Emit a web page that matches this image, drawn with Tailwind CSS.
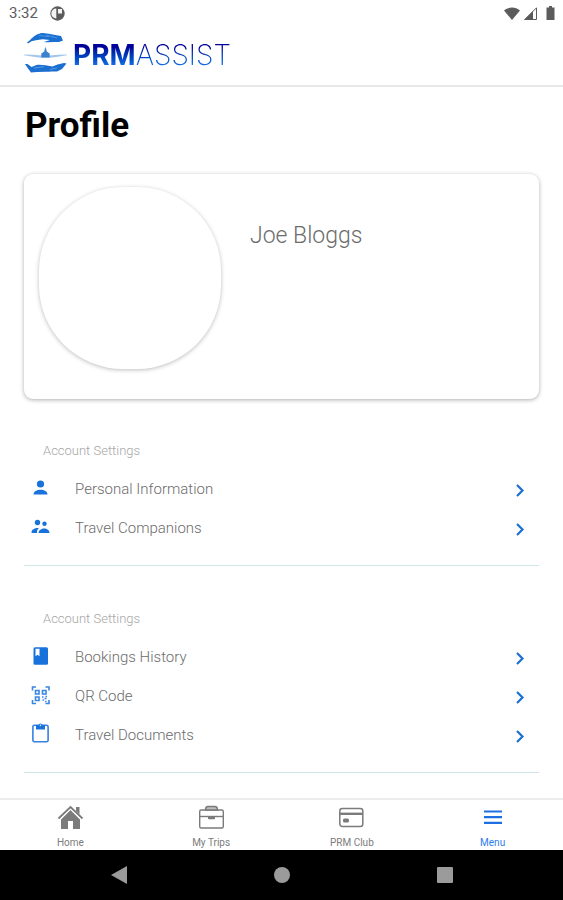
<!DOCTYPE html>
<html lang="en">
<head>
<meta charset="utf-8">
<meta name="viewport" content="width=device-width, initial-scale=1">
<title>Profile</title>
<script src="https://cdn.jsdelivr.net/npm/@tailwindcss/browser@4"></script>
</head>
<body class="flex min-h-screen flex-col bg-white font-['Roboto',sans-serif] text-[#6c6c6c]">
  <div class="flex h-[26px] items-center justify-between pr-2 pl-[9px] text-[#5c5c5c]">
    <div class="flex items-center gap-3">
      <span class="text-[15px] leading-5">3:32</span>
      <svg class="size-[15px]" viewBox="0 0 15 15" aria-hidden="true"><circle cx="7.500" cy="7.500" r="7.200" fill="#5c5c5c"/><path d="M6.300 2.500v10A5 5 0 0 1 6.300 2.500zM8 3h4v4.500H8z" fill="#f4f4f4"/></svg>
    </div>
    <div class="flex items-center gap-1">
      <svg class="h-[13px] w-4" viewBox="0 0 16 13" aria-hidden="true"><path d="M0 3.500C4.500-.5 11.500-.5 16 3.500L8 13z" fill="#5c5c5c"/></svg>
      <svg class="size-[13px]" viewBox="0 0 13 13" aria-hidden="true"><path d="M12.500.8v11.700H.8z" fill="none" stroke="#5c5c5c"/><path d="M9 4v9H0z" fill="#5c5c5c"/></svg>
      <span class="w-px"></span>
      <svg class="h-[14px] w-[9px]" viewBox="0 0 9 14" aria-hidden="true"><path d="M3 0h3v1.500h2.500V14H.5V1.500H3z" fill="#5c5c5c"/></svg>
    </div>
  </div>

  <header class="flex h-[61px] items-start gap-1.5 border-b-2 border-[#e8e8e8] pt-1.5 pl-6">
    <svg class="h-[42px] w-[43px]" viewBox="0 0 43 42" aria-hidden="true">
      <path d="M3 10.500C7 8 8 5 12 3c2-1 4-2 6-2l3 .2c5 .5 10 1.800 16 2.800l2 4.500-4 1.500c-4-.2-9 .5-15 0l6-2-7-.8C13 7.500 10 9 8 9L4 11.500z" fill="#1b6fd0"/>
      <path d="M15 3.500l10 1.200M22 3l11 3" stroke="#6fb0ee" stroke-width=".6"/>
      <path d="M0 22.500l9 .3 9 .7v-2l2.500-1.200V17l1-2.500 1 2.500v3.300L25 21.500v2l9-.7 9-.3v.8L32 25l-6 .7h-9L11 25 0 23.300z" fill="#a3c6ec"/>
      <path d="M21.500 15.500l1.200 4 3 2v4h-8.400v-4l3-2z" fill="#3d82ce"/>
      <path d="M1 32h2.500l4 3 5-2c3-.8 6 .2 9 .2l7 1.300 5-2L40 31l2.500.5L38 37l-5 2.500c-4 .2-7 0-11 .3l-9 .2-6 .5-3-4z" fill="#1b6fd0"/>
      <path d="M10 36l10-1.300M26 37.500l7-1.500" stroke="#6fb0ee" stroke-width=".7"/>
    </svg>
    <div class="bg-linear-to-b from-[#00009a] from-35% to-[#2478ee] to-80% bg-clip-text pt-px font-['Inter','Lato',sans-serif] text-[28px] leading-[44px] text-transparent"><span class="font-bold">PRM</span><span class="font-extralight">ASSIST</span></div>
  </header>

  <main class="flex-1 px-6 pt-4">
    <h1 class="pt-px pl-px text-[35px] leading-[44px] font-bold text-black">Profile</h1>

    <section class="mt-[26px] flex h-[225px] gap-[29px] rounded-[9px] bg-white pt-[13px] pl-[15px] shadow-[0_1px_4px_rgba(0,0,0,0.32)]">
      <div class="size-[182px] shrink-0 rounded-[84px] bg-white shadow-[0_1px_4px_rgba(0,0,0,0.26)]"></div>
      <p class="pt-[35px] text-[23px] leading-7 font-light">Joe Bloggs</p>
    </section>

    <section class="mt-8 border-b border-[#cfe6e8] pb-[17px]">
      <h2 class="flex h-[39px] items-center pl-[19px] text-[13px] font-light text-[#a6a6a6]">Account Settings</h2>
      <a href="#personal" class="flex h-[39px] items-center pr-[14px] pl-1.5 text-[15px] font-light">
        <svg class="mr-[25px] size-5 text-[#1872dc]" viewBox="0 0 20 20" fill="currentColor" aria-hidden="true"><circle cx="10.500" cy="4" r="3.600"/><path d="M3.500 14.500c0-6.400 14-6.400 14 0z"/></svg>
        <span class="flex-1">Personal Information</span>
        <svg class="h-3.5 w-2.5" viewBox="0 0 10 14" fill="none" stroke="#1b70d2" stroke-width="2.200" aria-hidden="true"><path d="M2 2l5.500 5.500L2 13"/></svg>
      </a>
      <a href="#companions" class="flex h-[39px] items-center pr-[14px] pl-1.5 text-[15px] font-light">
        <svg class="mr-[25px] size-5 text-[#1872dc]" viewBox="0 0 20 20" fill="currentColor" aria-hidden="true"><circle cx="7.500" cy="3.500" r="2.700"/><circle cx="14.500" cy="4.700" r="2.200"/><path d="M1.500 14c0-4 3.500-5.300 7.500-5-1.500 1.200-2 2.500-2 5zM8.500 14c.5-6 11-6 11 0z"/></svg>
        <span class="flex-1">Travel Companions</span>
        <svg class="h-3.5 w-2.5" viewBox="0 0 10 14" fill="none" stroke="#1b70d2" stroke-width="2.200" aria-hidden="true"><path d="M2 2l5.500 5.500L2 13"/></svg>
      </a>
    </section>

    <section class="mt-[33px] border-b border-[#cfe6e8] pb-[17px]">
      <h2 class="flex h-[39px] items-center pl-[19px] text-[13px] font-light text-[#a6a6a6]">Account Settings</h2>
      <a href="#bookings" class="flex h-[39px] items-center pr-[14px] pl-1.5 text-[15px] font-light">
        <svg class="mr-[25px] size-5 overflow-visible text-[#1872dc]" viewBox="0 0 20 20" aria-hidden="true"><rect x="3.500" y="-.8" width="14.500" height="17.500" rx="1.500" fill="currentColor"/><path d="M5.500 .8h4v7.500l-2-1.500-2 1.500z" fill="#fff"/></svg>
        <span class="flex-1">Bookings History</span>
        <svg class="h-3.5 w-2.5" viewBox="0 0 10 14" fill="none" stroke="#1b70d2" stroke-width="2.200" aria-hidden="true"><path d="M2 2l5.500 5.500L2 13"/></svg>
      </a>
      <a href="#qr" class="flex h-[39px] items-center pr-[14px] pl-1.5 text-[15px] font-light">
        <svg class="mr-[25px] size-5 overflow-visible text-[#3a86e4]" viewBox="0 0 20 20" fill="none" stroke="currentColor" stroke-width="1.600" aria-hidden="true"><path d="M2.500 3.500V0H6M15.500 0H19v3.500M2.500 13v3.500H6M15.500 16.500H19V13"/><path d="M5.500 3.500H9V7H5.500zM12.500 3.500H16V7h-3.500zM5.500 10H9v3.500H5.500z"/><path d="M12 10h1.500M14.500 11.500h2M12.500 13H14M15.500 9.500H17M15 14.500h1.500"/></svg>
        <span class="flex-1">QR Code</span>
        <svg class="h-3.5 w-2.5" viewBox="0 0 10 14" fill="none" stroke="#1b70d2" stroke-width="2.200" aria-hidden="true"><path d="M2 2l5.500 5.500L2 13"/></svg>
      </a>
      <a href="#documents" class="flex h-[39px] items-center pr-[14px] pl-1.5 text-[15px] font-light">
        <svg class="mr-[25px] size-5 overflow-visible text-[#3580e4]" viewBox="0 0 20 20" aria-hidden="true"><rect x="2.900" y="-.7" width="15.200" height="16.500" rx="1.500" fill="none" stroke="currentColor" stroke-width="1.600"/><path d="M6 -1h2.500a2 2 0 0 1 3.900 0H15v4.500H6z" fill="#1872dc"/><circle cx="10.400" cy="-.7" r=".8" fill="#fff"/></svg>
        <span class="flex-1">Travel Documents</span>
        <svg class="h-3.5 w-2.5" viewBox="0 0 10 14" fill="none" stroke="#1b70d2" stroke-width="2.200" aria-hidden="true"><path d="M2 2l5.500 5.500L2 13"/></svg>
      </a>
    </section>
  </main>

  <nav class="grid h-[52px] grid-cols-4 border-t-2 border-[#ececec] text-[10px] leading-3 text-[#7c7c7c]">
    <a href="#home" class="flex flex-col items-center gap-1.5 pt-1">
      <svg class="size-[27px]" viewBox="0 0 27 27" aria-hidden="true"><path d="M4 15.500l9.500-9.500 9.500 9.500V25h-7v-8h-5v8H4z" fill="#7b7b7b"/><path d="M1.500 14.500L13.500 3l12 11.500" fill="none" stroke="#7b7b7b" stroke-width="1.800"/><path d="M19 3h3.500v7.500L19 7z" fill="#7b7b7b"/><path d="M3.500 15L13.500 5.500l10 9.500" fill="none" stroke="#fff" stroke-width=".7"/></svg>
      <span>Home</span>
    </a>
    <a href="#trips" class="flex flex-col items-center gap-1.5 pt-1">
      <svg class="size-[27px]" viewBox="0 0 27 27" fill="none" stroke="#7b7b7b" stroke-width="1.400" aria-hidden="true"><rect x="1.700" y="6" width="23.600" height="18" rx="1.500"/><path d="M7.500 6c0-2 1-3.500 2.500-3.500h7c1.500 0 2.500 1.500 2.500 3.500z" fill="#bdbdbd"/><path d="M2 12.500h23"/><path d="M10 13h7v1.200l-1 1h-5l-1-1z" fill="#7b7b7b" stroke="none"/></svg>
      <span>My Trips</span>
    </a>
    <a href="#club" class="flex flex-col items-center gap-1.5 pt-1">
      <svg class="size-[27px]" viewBox="0 0 27 27" fill="none" stroke="#7b7b7b" aria-hidden="true"><rect x="1.800" y="4.500" width="23" height="18" rx="2.500" stroke-width="1.500"/><path d="M2 9.800h23" stroke-width="2.400"/><rect x="5" y="14.500" width="6" height="4" rx="1.500" fill="#7b7b7b" stroke="none"/></svg>
      <span>PRM Club</span>
    </a>
    <a href="#menu" class="flex flex-col items-center gap-1.5 pt-1 text-[#2b7dee]" aria-current="page">
      <svg class="size-[27px]" viewBox="0 0 27 27" stroke="#1e70e0" stroke-width="2.200" aria-hidden="true"><path d="M5 7.500h18M5 13.200h18M5 18.900h18"/></svg>
      <span>Menu</span>
    </a>
  </nav>

  <div class="flex h-[50px] items-center justify-center gap-[147px] bg-black">
    <button type="button" aria-label="Back"><svg class="h-[18px] w-4" viewBox="0 0 16 18" aria-hidden="true"><path d="M0 9l16-9v18z" fill="#9b9b9b"/></svg></button>
    <button type="button" aria-label="Home" class="size-4 rounded-full bg-[#9b9b9b]"></button>
    <button type="button" aria-label="Recent apps" class="size-4 rounded-[1px] bg-[#9b9b9b]"></button>
  </div>
</body>
</html>
